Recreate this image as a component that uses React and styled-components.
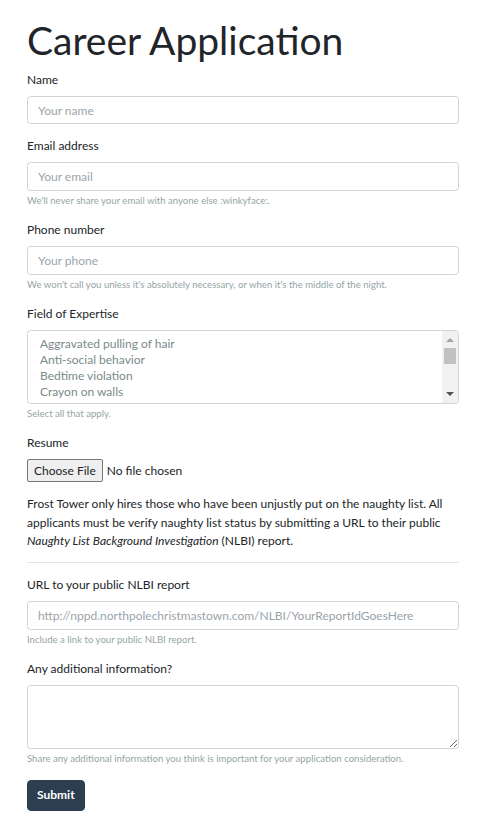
import React from "react";
import styled, { createGlobalStyle } from "styled-components";

const Global = createGlobalStyle`
  html, body { margin: 0; padding: 0; background: #fff; }
  body {
    font-family: Lato, "Noto Sans", "Liberation Sans", sans-serif;
    font-size: 12px;
    line-height: 1.5;
    color: #212529;
  }
  * { box-sizing: border-box; }
`;

const Page = styled.main`
  padding: 17px 43px 24px 27px;
`;

const Title = styled.h1`
  margin: 0 0 7px;
  font-size: 39px;
  line-height: 1.2;
  font-weight: 400;
  color: #212529;
`;

const Group = styled.div`
  margin-bottom: 13px;
`;

const Label = styled.label`
  display: block;
  margin-bottom: 7px;
  font-size: 12px;
  line-height: 18px;
  color: #212529;
`;

const fieldBase = `
  display: block;
  width: 100%;
  font-family: inherit;
  font-size: 12px;
  color: #7b8a8b;
  background: #fff;
  border: 1px solid #ced4da;
  border-radius: 3.5px;
  outline: none;
  &::placeholder { color: #9aa4ab; opacity: 1; }
`;

const Input = styled.input`
  ${fieldBase}
  height: 28.5px;
  padding: 0 10px;
  line-height: 18px;
`;

const TextArea = styled.textarea`
  ${fieldBase}
  height: 64.5px;
  padding: 4px 10px;
  resize: vertical;
`;

const Listbox = styled.div`
  display: flex;
  height: 74px;
  border: 1px solid #ced4da;
  border-radius: 3.5px;
  overflow: hidden;
  background: #fff;
`;

const OptionList = styled.div`
  flex: 1;
  min-width: 0;
  overflow: hidden;
  padding: 5px 10px 0;
`;

const Option = styled.div`
  padding: 0 2px 1px;
  font-size: 12px;
  line-height: 15px;
  color: #7b8a8b;
  white-space: nowrap;
`;

const Scrollbar = styled.div`
  flex: 0 0 16px;
  display: flex;
  flex-direction: column;
  background: #f1f1f1;
`;

const ScrollButton = styled.div`
  flex: 0 0 17px;
  display: flex;
  align-items: center;
  justify-content: center;
`;

const Track = styled.div`
  flex: 1;
  padding: 0 2px;
`;

const Thumb = styled.div`
  height: 16px;
  background: #c1c1c1;
`;

const Arrow = ({ up, color }) => (
  <svg width="8" height="5" viewBox="0 0 8 5" aria-hidden="true">
    <path d={up ? "M0 5 L4 1 L8 5 Z" : "M0 0 L8 0 L4 4 Z"} fill={color} />
  </svg>
);

const Help = styled.small`
  display: block;
  margin-top: 3px;
  font-size: 9.6px;
  line-height: 1.5;
  color: #95a5a6;
`;

const FileInput = styled.input`
  display: block;
  width: 100%;
  font-family: inherit;
  font-size: 12px;
  color: #212529;
  &::file-selector-button {
    font-family: inherit;
    font-size: 12px;
    color: #212529;
    background: #efefef;
    border: 1px solid #767676;
    border-radius: 2px;
    padding: 1px 6px;
    margin-right: 4px;
    height: 23px;
  }
`;

const Para = styled.p`
  margin: 0 0 12px;
  font-size: 12px;
  line-height: 18.2px;
`;

const Rule = styled.hr`
  margin: 0 0 13px;
  border: 0;
  border-top: 1px solid #e3e6e8;
`;

const Submit = styled.button`
  font-family: inherit;
  font-size: 12px;
  font-weight: 700;
  line-height: 18px;
  color: #fff;
  background: #2c3e50;
  border: 1px solid #2c3e50;
  border-radius: 4px;
  padding: 5.5px 9px;
  cursor: pointer;
`;

const expertise = [
  "Aggravated pulling of hair",
  "Anti-social behavior",
  "Bedtime violation",
  "Crayon on walls",
  "Failure to feed family pet",
  "Gum in hair",
  "Hiding vegetables",
  "Lying about brushing teeth",
  "Name calling",
  "Not sharing toys",
  "Sibling rivalry",
  "Tantrums in public",
];

export default function App() {
  return (
    <>
      <Global />
      <Page>
        <Title>Career Application</Title>
        <form onSubmit={(e) => e.preventDefault()}>
          <Group>
            <Label htmlFor="name">Name</Label>
            <Input id="name" type="text" placeholder="Your name" />
          </Group>
          <Group>
            <Label htmlFor="email">Email address</Label>
            <Input id="email" type="email" placeholder="Your email" />
            <Help>We'll never share your email with anyone else :winkyface:.</Help>
          </Group>
          <Group>
            <Label htmlFor="phone">Phone number</Label>
            <Input id="phone" type="tel" placeholder="Your phone" />
            <Help>
              We won't call you unless it's absolutely necessary, or when it's the
              middle of the night.
            </Help>
          </Group>
          <Group>
            <Label id="field-label">Field of Expertise</Label>
            <Listbox role="listbox" aria-multiselectable="true" aria-labelledby="field-label">
              <OptionList>
                {expertise.map((x) => (
                  <Option key={x} role="option" aria-selected="false">
                    {x}
                  </Option>
                ))}
              </OptionList>
              <Scrollbar aria-hidden="true">
                <ScrollButton>
                  <Arrow up color="#a3a3a3" />
                </ScrollButton>
                <Track>
                  <Thumb />
                </Track>
                <ScrollButton>
                  <Arrow color="#505050" />
                </ScrollButton>
              </Scrollbar>
            </Listbox>
            <Help>Select all that apply.</Help>
          </Group>
          <Group>
            <Label htmlFor="resume">Resume</Label>
            <FileInput id="resume" type="file" />
          </Group>
          <Para>
            Frost Tower only hires those who have been unjustly put on the naughty
            list. All applicants must be verify naughty list status by submitting a
            URL to their public <em>Naughty List Background Investigation</em> (NLBI)
            report.
          </Para>
          <Rule />
          <Group>
            <Label htmlFor="url">URL to your public NLBI report</Label>
            <Input
              id="url"
              type="url"
              placeholder="http://nppd.northpolechristmastown.com/NLBI/YourReportIdGoesHere"
            />
            <Help>Include a link to your public NLBI report.</Help>
          </Group>
          <Group>
            <Label htmlFor="more">Any additional information?</Label>
            <TextArea id="more" />
            <Help>
              Share any additional information you think is important for your
              application consideration.
            </Help>
          </Group>
          <Submit type="submit">Submit</Submit>
        </form>
      </Page>
    </>
  );
}
